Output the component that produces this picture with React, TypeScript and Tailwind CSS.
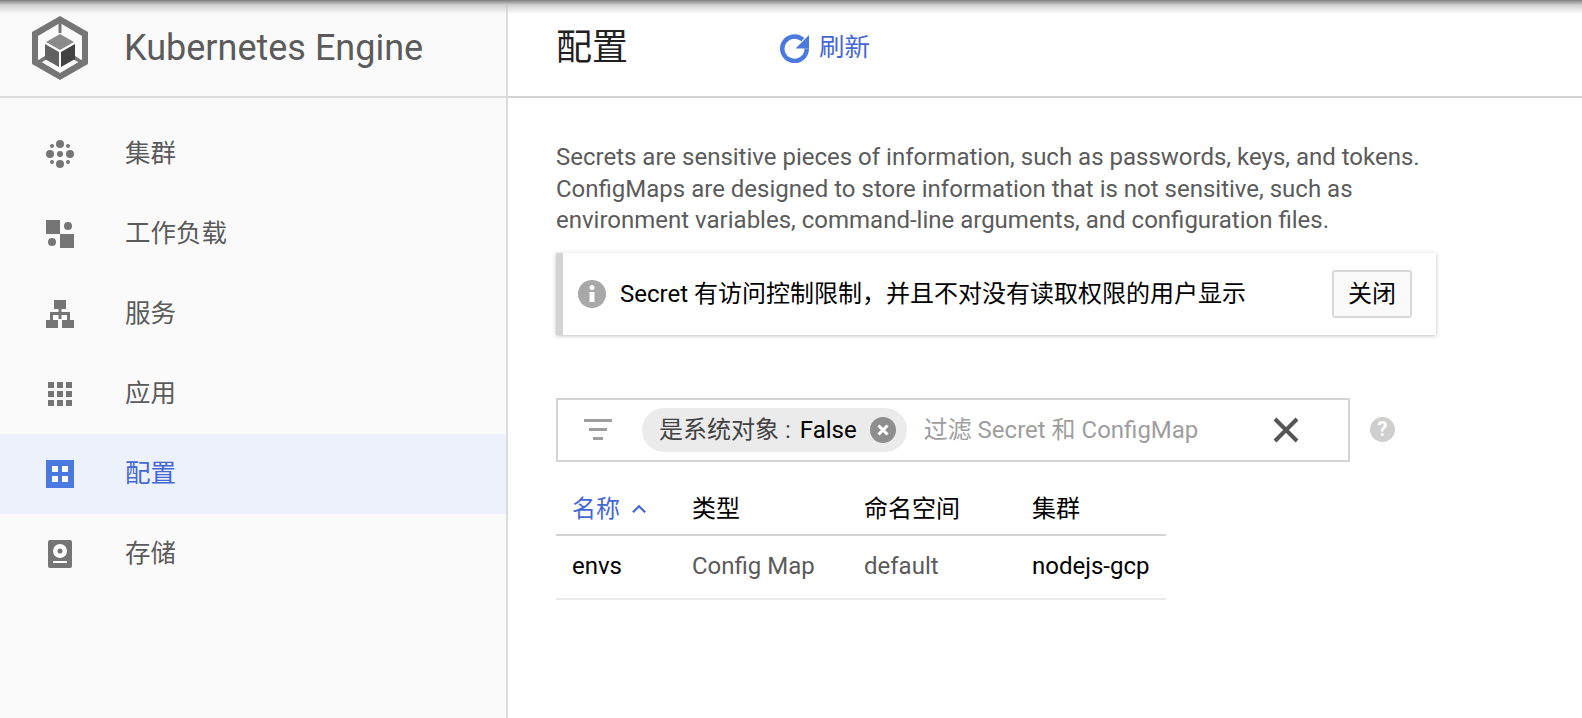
import React from 'react';

const ROBOTO = "font-['Roboto','Noto_Sans_CJK_SC',sans-serif]";

const HexLogo = () => (
  <svg width="60" height="64" viewBox="0 0 60 64">
    <path d="M30 0 L58 16 V48 L30 64 L2 48 V16 Z M30 7 L8 20 V44 L30 57 L52 44 V20 Z" fill="#757575" fillRule="evenodd" />
    <path d="M28.5 7 h3 v10 h-3 Z" fill="#757575" />
    <path d="M7 45 L18 38 L20 41 L9 48 Z M53 45 L42 38 L40 41 L51 48 Z" fill="#757575" />
    <path d="M30 18 L44 26 L30 34 L16 26 Z" fill="#8a8a8a" />
    <path d="M15 28 L29 36 V51 L15 43 Z" fill="#616161" />
    <path d="M45 28 L31 36 V51 L45 43 Z" fill="#424242" />
  </svg>
);

const ClusterIcon = () => (
  <svg width="28" height="28" viewBox="0 0 28 28" fill="#757575">
    <circle cx="14" cy="4" r="4" />
    <circle cx="14" cy="24" r="4" />
    <circle cx="4" cy="14" r="4" />
    <circle cx="24" cy="14" r="4" />
    <circle cx="14" cy="14" r="3" />
    <circle cx="6" cy="6" r="2" />
    <circle cx="22" cy="6" r="2" />
    <circle cx="6" cy="22" r="2" />
    <circle cx="22" cy="22" r="2" />
  </svg>
);

const WorkloadIcon = () => (
  <svg width="28" height="28" viewBox="0 0 28 28" fill="#757575">
    <rect x="0" y="0" width="14" height="14" />
    <rect x="14" y="14" width="14" height="14" />
    <circle cx="22" cy="6" r="4" />
    <circle cx="6" cy="22" r="4" />
  </svg>
);

const ServiceIcon = () => (
  <svg width="28" height="28" viewBox="0 0 28 28" fill="#757575">
    <rect x="8" y="0" width="12" height="9" />
    <rect x="0" y="20" width="12" height="8" />
    <rect x="16" y="20" width="12" height="8" />
    <path d="M12.5 9 h3 v3 H24 v8 h-3 v-5 H7 v5 H4 v-8 h8.5 Z" />
    <rect x="12.5" y="12" width="3" height="7" />
  </svg>
);

const AppsIcon = () => (
  <svg width="24" height="24" viewBox="0 0 24 24" fill="#757575">
    {[0, 9, 18].map(y =>
      [0, 9, 18].map(x => <rect key={`${x}-${y}`} x={x} y={y} width="6" height="6" />)
    )}
  </svg>
);

const ConfigIcon = () => (
  <svg width="28" height="28" viewBox="0 0 28 28">
    <rect width="28" height="28" fill="#4a7ae0" />
    <rect x="6" y="6" width="6" height="6" fill="#fff" />
    <rect x="16" y="6" width="6" height="6" fill="#fff" />
    <rect x="6" y="16" width="6" height="6" fill="#fff" />
    <rect x="16" y="16" width="6" height="6" fill="#fff" />
  </svg>
);

const StorageIcon = () => (
  <svg width="24" height="28" viewBox="0 0 24 28">
    <rect width="24" height="28" rx="2" fill="#757575" />
    <circle cx="12" cy="11" r="7" fill="#fff" />
    <circle cx="12" cy="11" r="2.5" fill="#757575" />
    <rect x="5" y="21" width="14" height="2" fill="#fff" />
  </svg>
);

const navItems = [
  { label: '集群', icon: <ClusterIcon /> },
  { label: '工作负载', icon: <WorkloadIcon /> },
  { label: '服务', icon: <ServiceIcon /> },
  { label: '应用', icon: <AppsIcon /> },
  { label: '配置', icon: <ConfigIcon />, active: true },
  { label: '存储', icon: <StorageIcon /> },
];

const App: React.FC = () => {
  return (
    <div className={`relative flex h-[718px] w-[1582px] overflow-hidden bg-white ${ROBOTO}`}>
      <div className="absolute inset-x-0 top-0 z-10 h-[14px] bg-gradient-to-b from-[#808080] via-[#cfcfcf] via-35% to-transparent" />

      <aside className="w-[508px] shrink-0 border-r-2 border-[#dcdcdc] bg-[#fafafa]">
        <div className="flex h-[98px] items-center border-b-2 border-[#dcdcdc] pl-[30px]">
          <HexLogo />
          <span className="ml-[34px] text-[36px] text-[#5b5b5b]">Kubernetes Engine</span>
        </div>
        <nav className="pt-[16px]">
          {navItems.map(item => (
            <div
              key={item.label}
              className={`flex h-[80px] items-center ${item.active ? 'bg-[#ecf1fb] text-[#4467d6]' : 'text-[#5b5b5b]'}`}
            >
              <div className="flex w-[125px] justify-center pr-[6px]">{item.icon}</div>
              <span className="pb-[2px] text-[25.5px]">{item.label}</span>
            </div>
          ))}
        </nav>
      </aside>

      <main className="flex-1">
        <div className="flex h-[98px] items-center border-b-2 border-[#d4d4d4] pl-[48px]">
          <h1 className="w-[224px] text-[36px] font-normal text-[#212121]">配置</h1>
          <svg width="29" height="29" viewBox="0 0 28 28">
            <path d="M25.8 14 A11.8 11.8 0 1 1 22 5.5" fill="none" stroke="#4a7ae0" strokeWidth="4.4" />
            <path d="M28 1 V14 H15 Z" fill="#4a7ae0" />
          </svg>
          <span className="ml-[10px] pb-[2px] text-[25.5px] text-[#4467d6]">刷新</span>
        </div>

        <div className="pl-[48px] pt-[44px]">
          <p className="text-[24px] leading-[31.5px] text-[#5b5b5b]">
            Secrets are sensitive pieces of information, such as passwords, keys, and tokens.
            <br />
            ConfigMaps are designed to store information that is not sensitive, such as
            <br />
            environment variables, command-line arguments, and configuration files.
          </p>

          <div className="mt-[16px] flex h-[82px] w-[880px] items-center border-l-[7px] border-[#d4d4d4] bg-white pl-[15px] pr-[24px] shadow-[0_1px_4px_rgba(0,0,0,0.25)]">
            <svg width="28" height="28" viewBox="0 0 28 28">
              <circle cx="14" cy="14" r="14" fill="#a8a8a8" />
              <circle cx="14" cy="7.5" r="2.5" fill="#fff" />
              <rect x="11.5" y="12" width="5" height="10" fill="#fff" />
            </svg>
            <span className="ml-[14px] flex-1 text-[24px] text-black">Secret 有访问控制限制&#xFF0C;并且不对没有读取权限的用户显示</span>
            <button className="flex h-[48px] w-[80px] items-center justify-center rounded-[3px] border-2 border-[#d8d8d8] bg-[#fafafa] text-[24px] text-black">
              关闭
            </button>
          </div>

          <div className="mt-[63px] flex items-center">
            <div className="flex h-[64px] w-[794px] items-center border-2 border-[#d4d4d4] pl-[26px]">
              <svg width="28" height="22" viewBox="0 0 28 22" fill="#9e9e9e">
                <rect x="0" y="0" width="28" height="3" />
                <rect x="5" y="9" width="18" height="3" />
                <rect x="9" y="18" width="10" height="3" />
              </svg>
              <div className="ml-[30px] flex h-[44px] items-center rounded-full bg-[#ebebeb] pl-[17px] pr-[11px]">
                <span className="text-[24px] text-[#424242]">是系统对象 :</span>
                <span className="ml-[9px] text-[24px] text-black">False</span>
                <svg className="ml-[13px]" width="26" height="26" viewBox="0 0 26 26">
                  <circle cx="13" cy="13" r="13" fill="#8e8e8e" />
                  <path d="M8.5 8.5 L17.5 17.5 M17.5 8.5 L8.5 17.5" stroke="#fff" strokeWidth="3" />
                </svg>
              </div>
              <span className="ml-[17px] w-[349px] text-[24px] text-[#9e9e9e]">过滤 Secret 和 ConfigMap</span>
              <svg width="26" height="26" viewBox="0 0 26 26">
                <path d="M2 2 L24 24 M24 2 L2 24" stroke="#555" strokeWidth="4" />
              </svg>
            </div>
            <svg className="ml-[20px]" width="25" height="25" viewBox="0 0 24 24">
              <circle cx="12" cy="12" r="12" fill="#cfcfcf" />
              <text x="12" y="18.5" textAnchor="middle" fontSize="19" fontWeight="700" fill="#fff" fontFamily="Roboto">?</text>
            </svg>
          </div>

          <div className="mt-[25px] w-[610px]">
            <div className="flex h-[49px] items-center border-b-2 border-[#d4d4d4] pb-[2px] pl-[16px] text-[24px] text-black">
              <span className="flex w-[120px] items-center text-[#4467d6]">
                名称
                <svg className="ml-[11px]" width="16" height="10" viewBox="0 0 14 9">
                  <path d="M1.5 7.5 L7 2 L12.5 7.5" fill="none" stroke="#4467d6" strokeWidth="2" />
                </svg>
              </span>
              <span className="w-[172px]">类型</span>
              <span className="w-[168px]">命名空间</span>
              <span>集群</span>
            </div>
            <div className="flex h-[64px] items-center border-b-2 border-[#ebebeb] pb-[2px] pl-[16px] text-[24px]">
              <span className="w-[120px] text-black">envs</span>
              <span className="w-[172px] text-[#5b5b5b]">Config Map</span>
              <span className="w-[168px] text-[#5b5b5b]">default</span>
              <span className="text-black">nodejs-gcp</span>
            </div>
          </div>
        </div>
      </main>
    </div>
  );
};

export default App;
